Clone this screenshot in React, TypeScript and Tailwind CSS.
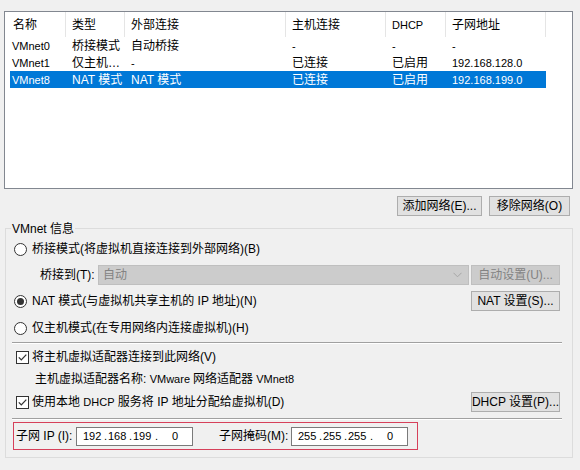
import React from "react";

const cols = [61, 59, 161, 100, 60, 100];
const rowCols = [56, 59, 161, 100, 60, 100];

function Radio({ checked }: { checked?: boolean }) {
  return (
    <span className="w-[13px] h-[13px] rounded-full border border-[#333333] bg-white flex items-center justify-center shrink-0">
      {checked && <span className="w-[7px] h-[7px] rounded-full bg-[#333333]" />}
    </span>
  );
}

function Check() {
  return (
    <span className="w-[13px] h-[13px] border border-[#333333] bg-white flex items-center justify-center shrink-0">
      <svg width="11" height="11" viewBox="0 0 11 11">
        <path d="M1.8 5.4 L4.3 7.9 L9.3 2.6" stroke="#333333" strokeWidth="1.3" fill="none" />
      </svg>
    </span>
  );
}

function Btn({ children, w, disabled }: { children: React.ReactNode; w: string; disabled?: boolean }) {
  return (
    <div
      className={
        disabled
          ? `${w} h-[20px] flex items-center justify-center whitespace-nowrap border border-[#bfbfbf] bg-[#cccccc] text-[#838383] shrink-0`
          : `${w} h-[20px] flex items-center justify-center whitespace-nowrap border border-[#adadad] bg-[#e1e1e1] text-black shrink-0`
      }
    >
      {children}
    </div>
  );
}

function IpBox({ parts }: { parts: string[] }) {
  return (
    <div className="w-[117px] h-[19px] border border-[#7a7a7a] bg-white flex items-center text-[11px] whitespace-nowrap">
      <span className="ml-[6px] w-[18px] shrink-0">{parts[0]}</span>
      <span className="w-[7px] pl-[3px] shrink-0">.</span>
      <span className="w-[18px] shrink-0">{parts[1]}</span>
      <span className="w-[7px] pl-[3px] shrink-0">.</span>
      <span className="w-[18px] shrink-0">{parts[2]}</span>
      <span className="w-[21px] pl-[4px] shrink-0">.</span>
      <span className="shrink-0">{parts[3]}</span>
    </div>
  );
}

const rows = [
  ["VMnet0", "桥接模式", "自动桥接", "-", "-", "-"],
  ["VMnet1", "仅主机…", "-", "已连接", "已启用", "192.168.128.0"],
  ["VMnet8", "NAT 模式", "NAT 模式", "已连接", "已启用", "192.168.199.0"],
];

const latin = (s: string) => /^[A-Za-z0-9.\-]+$/.test(s);

export default function App() {
  return (
    <div className="w-[580px] h-[470px] bg-[#f0f0f0] text-[12px] leading-[16px] text-black font-['Liberation_Sans','Noto_Sans_CJK_SC',sans-serif] overflow-hidden">
      <div className="pt-[11px] pl-[4px] pr-[7px]">
        <div className="h-[178px] border border-[#828790] bg-white">
          <div className="flex h-[25px]">
            {["名称", "类型", "外部连接", "主机连接", "DHCP", "子网地址"].map((h, i) => (
              <div
                key={h}
                style={{ width: cols[i] }}
                className={
                  i === 0
                    ? "h-full flex items-center pl-[8px] border-r border-[#e5e5e5] shrink-0"
                    : "h-full flex items-center pl-[6px] border-r border-[#e5e5e5] shrink-0"
                }
              >
                <span className={h === "DHCP" ? "text-[11px]" : ""}>{h}</span>
              </div>
            ))}
          </div>
          <div className="pl-[5px]">
            {rows.map((r, ri) => (
              <div
                key={ri}
                className={
                  ri === 2
                    ? "flex h-[17px] items-center w-[536px] bg-[#0078d7] text-white"
                    : "flex h-[17px] items-center w-[536px]"
                }
              >
                {r.map((c, ci) => (
                  <div
                    key={ci}
                    style={{ width: rowCols[ci] }}
                    className={ci === 0 ? "pl-[2px] shrink-0 whitespace-nowrap" : "pl-[6px] shrink-0 whitespace-nowrap"}
                  >
                    <span className={latin(c) ? "text-[11px]" : ""}>{c}</span>
                  </div>
                ))}
              </div>
            ))}
          </div>
        </div>
        <div className="flex justify-end gap-[7px] mt-[7px] pr-[3px]">
          <Btn w="w-[85px]">添加网络(E)...</Btn>
          <Btn w="w-[81px]">移除网络(O)</Btn>
        </div>
      </div>

      <div className="relative ml-[5px] mt-[12px] w-[568px] border border-[#dcdcdc] pt-[10px] pb-[7px] pl-[8px] pr-[12px]">
        <span className="absolute left-[5px] top-[-8px] px-[1px] bg-[#f0f0f0]">VMnet 信息</span>

        <div className="h-[20px] flex items-center gap-[5px]">
          <Radio />
          <span>桥接模式(将虚拟机直接连接到外部网络)(B)</span>
        </div>

        <div className="h-[20px] mt-[6px] flex items-center pl-[26px]">
          <span className="w-[58px] shrink-0">桥接到(T):</span>
          <div className="w-[371px] h-[20px] bg-[#cccccc] border border-[#bfbfbf] flex items-center justify-between pl-[4px] pr-[6px] text-[#838383]">
            <span>自动</span>
            <svg width="9" height="6" viewBox="0 0 9 6">
              <path d="M0.5 0.8 L4.5 4.8 L8.5 0.8" stroke="#a6a6a6" strokeWidth="1" fill="none" />
            </svg>
          </div>
          <div className="ml-auto">
            <Btn w="w-[89px]" disabled>
              自动设置(U)...
            </Btn>
          </div>
        </div>

        <div className="h-[20px] mt-[6px] flex items-center gap-[5px]">
          <Radio checked />
          <span>NAT 模式(与虚拟机共享主机的 IP 地址)(N)</span>
          <div className="ml-auto">
            <Btn w="w-[89px]">NAT 设置(S)...</Btn>
          </div>
        </div>

        <div className="h-[20px] mt-[7px] flex items-center gap-[5px]">
          <Radio />
          <span>仅主机模式(在专用网络内连接虚拟机)(H)</span>
        </div>

        <div className="mt-[4px] -ml-[2px] mr-[-2px] h-[2px] border-t border-[#a0a0a0] border-b border-b-white" />

        <div className="h-[20px] mt-[3px] flex items-center gap-[3px] pl-[2px]">
          <Check />
          <span>将主机虚拟适配器连接到此网络(V)</span>
        </div>

        <div className="h-[16px] mt-[4px] flex items-center pl-[21px] whitespace-pre">
          <span>主机虚拟适配器名称: </span>
          <span className="text-[11px]">VMware </span>
          <span>网络适配器</span>
          <span className="text-[11px]"> VMnet8</span>
        </div>

        <div className="h-[20px] mt-[5px] flex items-center gap-[3px] pl-[2px]">
          <Check />
          <span>
            使用本地 <span className="text-[11px]">DHCP</span> 服务将 IP 地址分配给虚拟机(D)
          </span>
          <div className="ml-auto">
            <Btn w="w-[89px]">DHCP 设置(P)...</Btn>
          </div>
        </div>

        <div className="mt-[6px] -ml-[2px] mr-[-2px] h-[2px] border-t border-[#a0a0a0] border-b border-b-white" />

        <div className="mt-[2px] ml-[-1px] w-[405px] h-[28px] border border-[#d6405a] flex items-center">
          <span className="w-[62px] pl-[2px] shrink-0 whitespace-nowrap">子网 IP (I):</span>
          <IpBox parts={["192", "168", "199", "0"]} />
          <span className="w-[98px] pl-[26px] shrink-0 whitespace-nowrap">子网掩码(M):</span>
          <IpBox parts={["255", "255", "255", "0"]} />
        </div>
      </div>
    </div>
  );
}
